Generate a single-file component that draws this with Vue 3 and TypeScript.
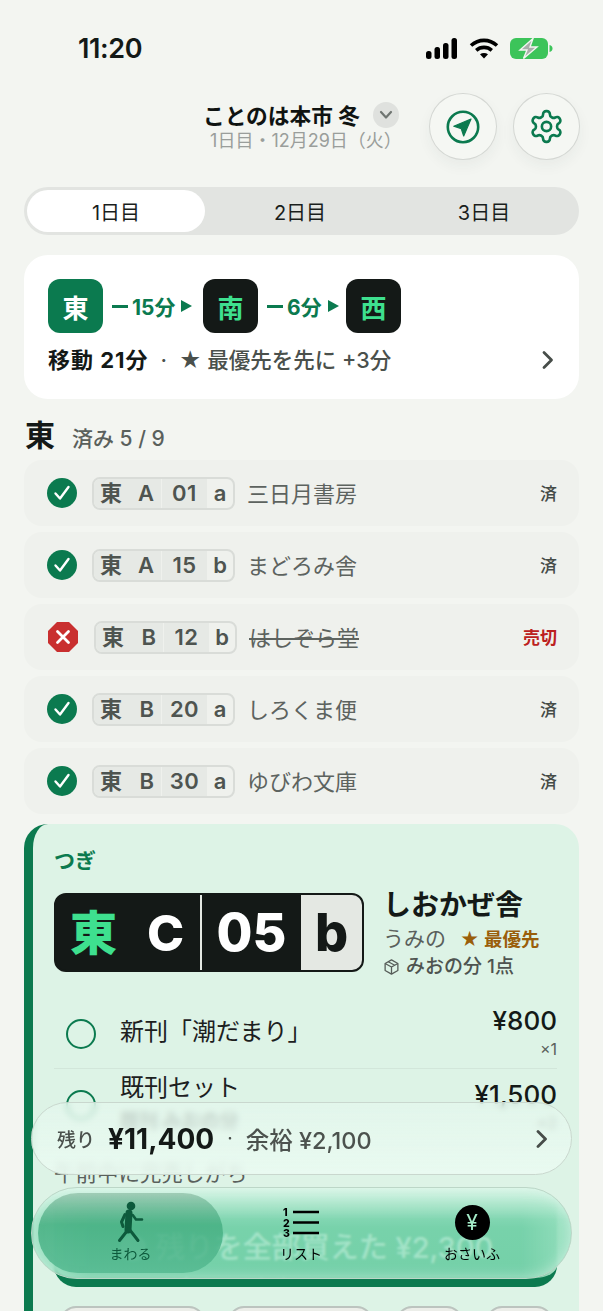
<script setup lang="ts">
type Stop = {
  id: number;
  hall: string;
  block: string;
  num: string;
  side: string;
  name: string;
  soldOut?: boolean;
};

const days = ["1日目", "2日目", "3日目"];

const stops: Stop[] = [
  { id: 1, hall: "東", block: "A", num: "01", side: "a", name: "三日月書房" },
  { id: 2, hall: "東", block: "A", num: "15", side: "b", name: "まどろみ舎" },
  { id: 3, hall: "東", block: "B", num: "12", side: "b", name: "はしぞら堂", soldOut: true },
  { id: 4, hall: "東", block: "B", num: "20", side: "a", name: "しろくま便" },
  { id: 5, hall: "東", block: "B", num: "30", side: "a", name: "ゆびわ文庫" },
];
</script>

<template>
  <div class="screen">
    <div class="status">
      <span class="time">11:20</span>
      <div class="status-icons">
        <svg width="32" height="21" viewBox="0 0 32 21" fill="#000">
          <rect x="0" y="13" width="5.5" height="8" rx="2.5" />
          <rect x="8.5" y="9" width="5.5" height="12" rx="2.5" />
          <rect x="17" y="5" width="5.5" height="16" rx="2.5" />
          <rect x="25.5" y="0" width="5.5" height="21" rx="2.5" />
        </svg>
        <svg width="30" height="21" viewBox="0 0 30 21" fill="none" stroke="#000" stroke-width="3.6">
          <path d="M2 7.5C9.5 .6 20.5 .6 28 7.5" />
          <path d="M7.2 12.3c4.5-3.9 11.1-3.9 15.6 0" />
          <path d="M15 20.5l-4-4.2c2.4-1.9 5.6-1.9 8 0z" fill="#000" stroke="none" />
        </svg>
        <svg width="43" height="21" viewBox="0 0 43 21">
          <rect x="0" y="0" width="38" height="21" rx="6" fill="#3cc45a" />
          <path d="M39.5 7c2 .5 3 1.800 3 3.500s-1 3-3 3.500z" fill="#3cc45a" />
          <path d="M23 0.500L10 12h7l-3.500 8.500L27 9h-7z" fill="#a9aeaa" stroke="#f3f5f1" stroke-width="1.400" />
        </svg>
      </div>
    </div>

    <header class="header">
      <div class="title-block">
        <div class="title-row">
          <span class="title">ことのは本市 冬</span>
          <span class="title-chev">
            <svg width="14" height="10" viewBox="0 0 14 10" fill="none" stroke="#6f7571" stroke-width="2.200" stroke-linecap="round" stroke-linejoin="round">
              <path d="M2 2l5 5.500L12 2" />
            </svg>
          </span>
        </div>
        <div class="subtitle">1日目・12月29日（火）</div>
      </div>
      <button class="round-btn">
        <svg width="36" height="36" viewBox="0 0 36 36" fill="none">
          <circle cx="18" cy="18" r="15.200" stroke="#0b7a4f" stroke-width="2.600" />
          <path d="M26 10L8.800 17.300l7.400 2.300 2.500 7.400z" fill="#0b7a4f" stroke="#0b7a4f" stroke-width="1.200" stroke-linejoin="round" />
        </svg>
      </button>
      <button class="round-btn">
        <svg width="37" height="37" viewBox="0 0 24 24" fill="none" stroke="#0b7a4f" stroke-width="1.700" stroke-linecap="round" stroke-linejoin="round">
          <path d="M12.220 2h-.44a2 2 0 0 0-2 2v.18a2 2 0 0 1-1 1.730l-.43.25a2 2 0 0 1-2 0l-.15-.08a2 2 0 0 0-2.730.73l-.22.38a2 2 0 0 0 .73 2.730l.15.1a2 2 0 0 1 1 1.720v.51a2 2 0 0 1-1 1.740l-.15.09a2 2 0 0 0-.73 2.730l.22.38a2 2 0 0 0 2.730.73l.15-.08a2 2 0 0 1 2 0l.43.25a2 2 0 0 1 1 1.730V20a2 2 0 0 0 2 2h.44a2 2 0 0 0 2-2v-.18a2 2 0 0 1 1-1.730l.43-.25a2 2 0 0 1 2 0l.15.08a2 2 0 0 0 2.730-.73l.22-.39a2 2 0 0 0-.73-2.730l-.15-.08a2 2 0 0 1-1-1.740v-.5a2 2 0 0 1 1-1.740l.15-.09a2 2 0 0 0 .73-2.730l-.22-.38a2 2 0 0 0-2.730-.73l-.15.08a2 2 0 0 1-2 0l-.43-.25a2 2 0 0 1-1-1.730V4a2 2 0 0 0-2-2z" />
          <circle cx="12" cy="12" r="3" />
        </svg>
      </button>
    </header>

    <main class="content">
      <div class="tabs">
        <div v-for="(d, i) in days" :key="d" class="tab" :class="{ 'tab--active': i === 0 }">{{ d }}</div>
      </div>

      <section class="route-card">
        <div class="route">
          <span class="hall hall--current">東</span>
          <span class="leg"><i class="dash"></i>15分<i class="arrow"></i></span>
          <span class="hall">南</span>
          <span class="leg leg--short"><i class="dash"></i>6分<i class="arrow"></i></span>
          <span class="hall">西</span>
        </div>
        <div class="route-foot">
          <b>移動 21分</b>
          <span class="route-dot">·</span>
          <span class="route-note">★ 最優先を先に +3分</span>
          <svg class="route-chev" width="14" height="20" viewBox="0 0 14 20" fill="none" stroke="#474d49" stroke-width="2.800" stroke-linecap="round" stroke-linejoin="round">
            <path d="M3 2.500l7.500 7.500L3 17.500" />
          </svg>
        </div>
      </section>

      <div class="section-head">
        <span class="section-hall">東</span>
        <span class="section-count">済み 5 / 9</span>
      </div>

      <ul class="stops">
        <li v-for="s in stops" :key="s.id" class="stop" :class="{ 'stop--sold': s.soldOut }">
          <svg v-if="!s.soldOut" class="stop-icon" width="30" height="30" viewBox="0 0 30 30">
            <circle cx="15" cy="15" r="15" fill="#0b7a4f" />
            <path d="M8.500 15.500l4.500 5L21.500 9" fill="none" stroke="#fff" stroke-width="2.400" stroke-linecap="round" stroke-linejoin="round" />
          </svg>
          <svg v-else class="stop-icon" width="30" height="30" viewBox="0 0 30 30">
            <path d="M9 0h12l9 9v12l-9 9H9l-9-9V9z" fill="#c92f2f" />
            <path d="M9.500 9.500l11 11M20.500 9.500l-11 11" fill="none" stroke="#fff" stroke-width="2.800" stroke-linecap="round" />
          </svg>
          <span class="tag">
            <span class="tag-a"><span>{{ s.hall }}</span><span>{{ s.block }}</span></span>
            <span class="tag-b">{{ s.num }}</span>
            <span class="tag-c">{{ s.side }}</span>
          </span>
          <span class="stop-name">{{ s.name }}</span>
          <span class="stop-state">{{ s.soldOut ? "売切" : "済" }}</span>
        </li>
      </ul>

      <section class="next">
        <div class="next-label">つぎ</div>
        <div class="next-main">
          <div class="plate">
            <span class="plate-a"><em>東</em><span>C</span></span>
            <span class="plate-b">05</span>
            <span class="plate-c">b</span>
          </div>
          <div class="next-info">
            <div class="next-name">しおかぜ舎</div>
            <div class="next-by">うみの<span class="prio">★ 最優先</span></div>
            <div class="next-for">
              <svg width="17" height="18" viewBox="0 0 24 24" fill="none" stroke="#565c58" stroke-width="1.800" stroke-linejoin="round">
                <path d="M12 2l9 5v10l-9 5-9-5V7z" />
                <path d="M3 7l9 5 9-5M12 12v10M7.500 4.500l9 5" />
              </svg>
              みおの分 1点
            </div>
          </div>
        </div>

        <div class="item">
          <i class="item-check"></i>
          <div class="item-body"><div class="item-name">新刊「潮だまり」</div></div>
          <div class="item-price"><b>¥800</b><small>×1</small></div>
        </div>
        <div class="item item--second">
          <i class="item-check"></i>
          <div class="item-body">
            <div class="item-name">既刊セット</div>
            <div class="item-sub">既刊 みおの分</div>
          </div>
          <div class="item-price"><b>¥1,500</b><small>×2</small></div>
        </div>

        <p class="next-note">午前中に完売しがち</p>

        <div class="buy">
          <div class="buy-inner">
            <div class="buy-line">
              <svg width="30" height="30" viewBox="0 0 30 30"><circle cx="15" cy="15" r="13" fill="#fff" /></svg>
              残りを全部買えた ¥2,300
            </div>
            <div class="buy-line buy-line--sub">
              <svg width="26" height="26" viewBox="0 0 30 30"><circle cx="15" cy="15" r="13" fill="#fff" /></svg>
              済みを手動で買えた ¥2,300
            </div>
          </div>
        </div>

        <div class="chips">
          <span class="chip chip--wide"></span>
          <span class="chip chip--wide"></span>
          <span class="chip"></span>
          <span class="chip"></span>
        </div>
      </section>
    </main>

    <div class="budget">
      <span class="budget-label">残り</span>
      <b class="budget-amount">¥11,400</b>
      <span class="budget-dot">·</span>
      <span class="budget-spare">余裕 ¥2,100</span>
      <svg class="budget-chev" width="14" height="20" viewBox="0 0 14 20" fill="none" stroke="#474d49" stroke-width="2.800" stroke-linecap="round" stroke-linejoin="round">
        <path d="M3 2.500l7.500 7.500L3 17.500" />
      </svg>
    </div>

    <nav class="tabbar">
      <div class="nav-item nav-item--active">
        <svg width="30" height="44" viewBox="0 0 30 44" fill="none" stroke="#0d5a3c" stroke-linecap="round" stroke-linejoin="round">
          <circle cx="15" cy="5" r="4.300" fill="#0d5a3c" stroke="none" />
          <path d="M13 12l-1 17" stroke-width="7" />
          <path d="M16.700 14l3.300 4.500h6" stroke-width="2.600" />
          <path d="M9 13.500L5.500 21l1.500 4.500" stroke-width="3" />
          <path d="M11 30L3.500 39.500M13 28l4 5 5 6.500" stroke-width="3" />
        </svg>
        <span>まわる</span>
      </div>
      <div class="nav-item">
        <svg class="list-icon" width="36" height="34" viewBox="0 0 36 34">
          <text x="0" y="9" class="list-num">1</text>
          <text x="0" y="19.500" class="list-num">2</text>
          <text x="0" y="30" class="list-num">3</text>
          <path d="M10 5h26M10 15.500h26M10 26h26" stroke="#000" stroke-width="2.600" />
        </svg>
        <span>リスト</span>
      </div>
      <div class="nav-item">
        <span class="yen-coin">¥</span>
        <span>おさいふ</span>
      </div>
    </nav>
  </div>
</template>

<style>
html,
body {
  margin: 0;
  background: #f3f5f1;
}
</style>

<style scoped>
.screen {
  position: relative;
  width: 603px;
  height: 1311px;
  overflow: hidden;
  background: #f3f5f1;
  font-family: Inter, "Noto Sans CJK JP", sans-serif;
  color: #141917;
}

.status {
  display: flex;
  justify-content: space-between;
  align-items: center;
  height: 21px;
  padding: 38px 50px 0 78px;
}

.time {
  font-size: 27px;
  font-weight: 600;
  letter-spacing: -0.4px;
}

.status-icons {
  display: flex;
  align-items: center;
  gap: 11px;
}

.header {
  display: flex;
  justify-content: flex-end;
  align-items: center;
  gap: 16px;
  padding: 34px 23px 0 0;
}

.title-block {
  margin-right: 14px;
  text-align: center;
}

.title-row {
  display: flex;
  align-items: center;
  gap: 13px;
  height: 26px;
}

.title {
  font-size: 21.7px;
  font-weight: 600;
  color: #0f1311;
}

.title-chev {
  display: flex;
  align-items: center;
  justify-content: center;
  width: 26px;
  height: 26px;
  border-radius: 50%;
  background: #dfe1de;
}

.subtitle {
  margin: 1px -10px 0 0;
  font-size: 18px;
  line-height: 23px;
  color: #9a9e9b;
}

.round-btn {
  display: flex;
  align-items: center;
  justify-content: center;
  width: 67.5px;
  height: 67px;
  padding: 0;
  border: 1px solid #d4d7d3;
  border-radius: 50%;
  background: #f5f7f3;
  box-shadow: 0 6px 14px rgba(40, 60, 50, 0.05);
}

.content {
  padding: 27px 24px 0;
}

.tabs {
  display: grid;
  grid-template-columns: 181px 1fr 1fr;
  height: 48px;
  padding: 3px;
  box-sizing: border-box;
  border-radius: 24px;
  background: #e2e4e1;
}

.tab {
  display: flex;
  align-items: center;
  justify-content: center;
  font-size: 20px;
  color: #1a1e1c;
}

.tab--active {
  margin-right: 3px;
  border-radius: 21px;
  background: #fff;
}

.route-card {
  margin-top: 20px;
  padding: 24px 24px 0;
  height: 144px;
  box-sizing: border-box;
  border-radius: 24px;
  background: #fff;
}

.route {
  display: flex;
  align-items: center;
}

.hall {
  display: flex;
  align-items: center;
  justify-content: center;
  width: 55px;
  height: 54px;
  border-radius: 12px;
  background: #141917;
  color: #3ee08f;
  font-size: 26px;
  font-weight: 600;
}

.hall--current {
  background: #0b7a4f;
  color: #fff;
  font-weight: 700;
}

.leg {
  display: flex;
  align-items: center;
  width: 100px;
  padding-left: 9px;
  box-sizing: border-box;
  font-size: 21px;
  font-weight: 700;
  color: #0b7a4f;
}

.leg--short {
  width: 88px;
}

.dash {
  width: 16px;
  height: 3px;
  margin-right: 4px;
  background: #0b7a4f;
}

.arrow {
  width: 0;
  height: 0;
  margin-left: 6px;
  border-top: 6px solid transparent;
  border-bottom: 6px solid transparent;
  border-left: 11px solid #0b7a4f;
}

.route-foot {
  display: flex;
  align-items: center;
  margin-top: 13px;
  font-size: 21.5px;
  line-height: 28px;
  color: #4a504c;
  font-weight: 500;
}

.route-foot b {
  font-size: 22px;
  letter-spacing: 1px;
  font-weight: 700;
  color: #141917;
}

.route-dot {
  margin: 0 12px;
}

.route-chev {
  margin-left: auto;
}

.section-head {
  display: flex;
  align-items: baseline;
  gap: 17px;
  margin: 15px 0 0 1px;
  height: 46px;
}

.section-hall {
  font-size: 30px;
  font-weight: 700;
  line-height: 42px;
}

.section-count {
  font-size: 21px;
  font-weight: 500;
  color: #5a605c;
}

.stops {
  display: flex;
  flex-direction: column;
  gap: 6px;
  margin: 0;
  padding: 0;
  list-style: none;
}

.stop {
  display: flex;
  align-items: center;
  height: 66px;
  padding: 0 22px 0 23px;
  border-radius: 18px;
  background: #eff1ed;
}

.stop--sold .stop-icon {
  margin-left: 1px;
  margin-right: 16px;
}

.stop-icon {
  flex: none;
  margin-right: 15px;
}

.tag {
  display: flex;
  height: 33px;
  border: 2px solid #d9dcd8;
  border-radius: 8px;
  overflow: hidden;
  box-sizing: border-box;
  font-size: 22px;
  font-weight: 600;
  color: #4e5450;
}

.tag-a,
.tag-b,
.tag-c {
  display: flex;
  align-items: center;
  justify-content: center;
  line-height: 1;
}

.tag-a {
  justify-content: space-between;
  width: 67px;
  padding: 0 7px 0 6px;
  box-sizing: border-box;
  background: #e6e9e5;
}

.tag-b {
  width: 45px;
  margin-left: 1px;
  background: #e6e9e5;
  letter-spacing: 0.5px;
}

.tag-c {
  width: 26px;
}

.stop-name {
  margin: 0 0 2px 12px;
  font-size: 22px;
  color: #5d635f;
}

.stop--sold .stop-name {
  text-decoration: line-through;
}

.stop-state {
  margin: 0 0 2px auto;
  font-size: 17px;
  font-weight: 500;
  color: #454b47;
}

.stop--sold .stop-state {
  color: #bc2020;
  font-weight: 600;
}

.next {
  margin-top: 10px;
  padding: 22px 22px 0 21px;
  border-left: 9px solid #0b7a4f;
  border-radius: 24px 24px 0 0;
  background: #ddf3e6;
}

.next-label {
  font-size: 21px;
  font-weight: 700;
  line-height: 30px;
  color: #0b7a4f;
}

.next-main {
  display: flex;
  gap: 19px;
  margin-top: 17px;
}

.plate {
  flex: none;
  display: flex;
  width: 310px;
  height: 79px;
  box-sizing: border-box;
  overflow: hidden;
  border: 2px solid #141917;
  border-radius: 12px;
  background: #141917;
  color: #fff;
  font-size: 52px;
  font-weight: 800;
}

.plate-a,
.plate-b,
.plate-c {
  display: flex;
  align-items: center;
  justify-content: center;
  line-height: 1;
}

.plate-a {
  gap: 30px;
  width: 146px;
  padding-right: 2px;
  box-sizing: border-box;
  border-right: 2px solid #e4e8e3;
  font-size: 50px;
}

.plate-a em {
  font-style: normal;
  font-size: 47px;
  color: #3ee08f;
}

.plate-b {
  width: 99px;
}

.plate-c {
  flex: 1;
  background: #e4e8e3;
  color: #141917;
}

.next-info {
  margin-top: -7px;
}

.next-name {
  font-size: 28px;
  font-weight: 600;
  line-height: 38px;
}

.next-by {
  display: flex;
  align-items: center;
  font-size: 21px;
  line-height: 30px;
  color: #5a605c;
}

.prio {
  margin-left: 14px;
  font-size: 18.5px;
  font-weight: 600;
  color: #9a5e0a;
}

.next-for {
  display: flex;
  align-items: center;
  gap: 6px;
  font-size: 19px;
  font-weight: 500;
  line-height: 26px;
  color: #4e5450;
}

.item {
  display: flex;
  margin-top: 16px;
  height: 73px;
  box-sizing: border-box;
  padding: 10px 0 0 12px;
  border-bottom: 1px solid #d2e6da;
}

.item--second {
  margin-top: 0;
  padding-top: 2px;
  height: 90px;
  border-bottom: 0;
}

.item-check {
  flex: none;
  width: 30px;
  height: 30px;
  margin-top: 13px;
  box-sizing: border-box;
  border: 2.5px solid #0b7a4f;
  border-radius: 50%;
}

.item--second .item-check {
  margin-top: 19px;
}

.item-body {
  flex: 1;
  margin-left: 24px;
}

.item-name {
  margin-top: 9px;
  font-size: 24px;
  line-height: 34px;
  color: #1c201e;
}

.item--second .item-name {
  margin-top: 0;
}

.item-sub {
  margin-top: 1px;
  font-size: 19px;
  font-weight: 700;
  color: #555b57;
}

.item-price {
  display: flex;
  flex-direction: column;
  align-items: flex-end;
}

.item--second .item-price {
  margin-top: 9px;
}

.item-price b {
  font-size: 26px;
  font-weight: 500;
  line-height: 30px;
}

.item-price small {
  font-size: 16px;
  line-height: 26px;
  color: #5a605c;
}

.next-note {
  margin: 0;
  font-size: 21.5px;
  line-height: 28px;
  color: #5a605c;
}

.buy {
  margin-top: 9px;
  height: 91px;
  box-sizing: border-box;
  overflow: hidden;
  border-radius: 0 0 22px 22px;
  border-bottom: 9px solid #0b7a4f;
  background: linear-gradient(90deg, #a9dfc4, #5fbd95 7%, #5fbd95 93%, #a9dfc4);
  color: #fff;
}

.buy-inner {
  height: 100%;
  padding: 34px 0 0;
  box-sizing: border-box;
  background: linear-gradient(180deg, #ddf3e6, rgba(221, 243, 230, 0) 32px);
}

.buy-line {
  display: flex;
  align-items: center;
  justify-content: center;
  gap: 8px;
  font-size: 29px;
  font-weight: 500;
  line-height: 36px;
}

.buy-line--sub {
  font-size: 24px;
  line-height: 30px;
  margin-top: 9px;
}

.chips {
  display: flex;
  gap: 23px;
  margin: 19px 0 0 6px;
}

.chip {
  width: 67px;
  height: 40px;
  box-sizing: border-box;
  border: 2px solid #bcc4bf;
  border-radius: 16px;
  background: #eceee9;
}

.chip--wide {
  width: 145px;
}

.budget {
  position: absolute;
  left: 31px;
  top: 1102px;
  display: flex;
  align-items: center;
  width: 541px;
  height: 73px;
  box-sizing: border-box;
  padding: 0 22px 0 25px;
  border: 1px solid #c9d7ce;
  border-radius: 37px;
  background: linear-gradient(180deg, rgba(228, 247, 237, 0.72), rgba(234, 250, 241, 0.9));
  backdrop-filter: blur(3px);
}

.budget-label {
  font-size: 19px;
  font-weight: 500;
  color: #4a504c;
}

.budget-amount {
  margin-left: 13px;
  font-size: 28px;
  font-weight: 700;
}

.budget-dot {
  margin: 0 13px;
  font-size: 19px;
  color: #4a504c;
}

.budget-spare {
  font-size: 23.5px;
  font-weight: 500;
  color: #4c524e;
}

.budget-chev {
  margin-left: auto;
}

.tabbar {
  position: absolute;
  left: 31px;
  top: 1187px;
  display: grid;
  grid-template-columns: 185px 156px 186px;
  width: 541px;
  height: 92px;
  box-sizing: border-box;
  padding: 5px 6px;
  border: 1px solid #bcd6c7;
  border-radius: 46px;
  background: linear-gradient(180deg, rgba(205, 242, 224, 0.8) 0%, rgba(130, 218, 180, 0.72) 35%, rgba(125, 215, 176, 0.72) 100%);
  backdrop-filter: blur(1px);
  box-shadow: inset 0 0 14px rgba(255, 255, 255, 0.45);
}

.nav-item {
  display: flex;
  flex-direction: column;
  align-items: center;
  justify-content: flex-end;
  padding-bottom: 10px;
  font-size: 14px;
  line-height: 18px;
  color: #000;
}

.nav-item--active {
  border-radius: 40px;
  background: linear-gradient(180deg, rgba(130, 180, 155, 0.6), rgba(70, 175, 130, 0.85) 40%, rgba(85, 185, 145, 0.85));
  color: #0d5a3c;
}

.list-icon {
  margin-bottom: 4px;
}

.list-num {
  font-family: Inter, sans-serif;
  font-size: 10.5px;
  font-weight: 800;
}

.yen-coin {
  display: flex;
  align-items: center;
  justify-content: center;
  width: 35px;
  height: 35px;
  margin-bottom: 5px;
  border-radius: 50%;
  background: #000;
  color: #a5ecc9;
  font-size: 21px;
  line-height: 1;
}
</style>
